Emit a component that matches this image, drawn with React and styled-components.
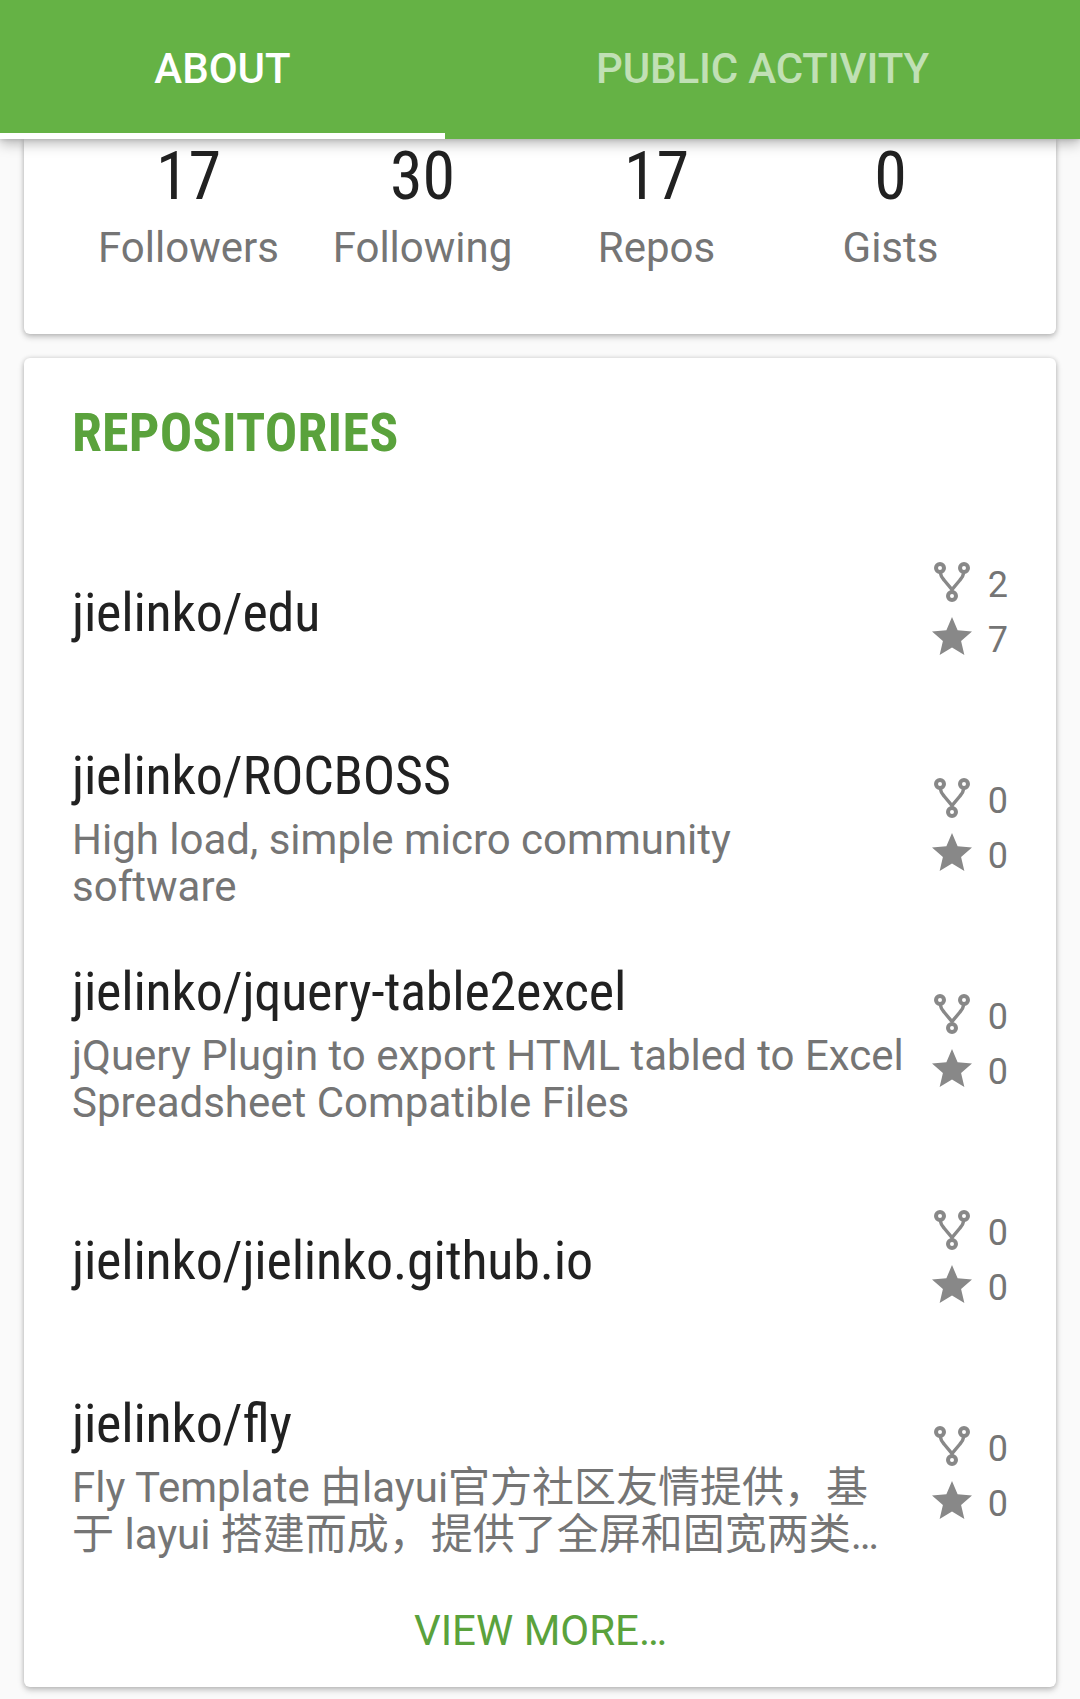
import React from "react";
import styled, { createGlobalStyle } from "styled-components";

const Global = createGlobalStyle`
  * { box-sizing: border-box; }
  body {
    margin: 0;
    background: #fafafa;
    font-family: Roboto, "Noto Sans CJK SC", sans-serif;
    color: #212121;
  }
`;

const Screen = styled.div`
  height: 1699px;
  overflow: hidden;
`;

const TabBar = styled.nav`
  position: relative;
  z-index: 1;
  display: flex;
  height: 139px;
  background: #65b245;
  box-shadow: 0 5px 12px rgba(0, 0, 0, 0.26), 0 1px 4px rgba(0, 0, 0, 0.12);
`;

const Tab = styled.div`
  flex: ${(p) => (p.$width ? `0 0 ${p.$width}px` : "1")};
  display: flex;
  justify-content: center;
  padding-top: 44px;
  line-height: 50px;
  font-size: 42px;
  font-weight: 500;
  letter-spacing: ${(p) => (p.$active ? "0" : "-0.15px")};
  white-space: nowrap;
  color: ${(p) => (p.$active ? "#fff" : "#c1e0b5")};
  border-bottom: 6px solid ${(p) => (p.$active ? "#fff" : "transparent")};
`;

const Card = styled.section`
  margin: 0 24px;
  background: #fff;
  border-radius: 6px;
  box-shadow: 0 3px 6px rgba(0, 0, 0, 0.22), 0 0 5px rgba(0, 0, 0, 0.14);
`;

const StatsCard = styled(Card)`
  display: grid;
  grid-template-columns: repeat(4, 1fr);
  height: 195px;
  padding: 0 48px;
  border-top-left-radius: 0;
  border-top-right-radius: 0;
  text-align: center;
`;

const Condensed = styled.span`
  display: block;
  font-family: "Roboto Condensed", Roboto, sans-serif;
  font-stretch: 75%;
  white-space: nowrap;
`;

const StatValue = styled(Condensed)`
  margin-right: 1px;
  font-size: 66px;
  line-height: 75px;
`;

const StatLabel = styled.div`
  margin: 9px 1px 0 0;
  font-size: 42px;
  line-height: 50px;
  color: #757575;
`;

const ReposCard = styled(Card)`
  margin-top: 24px;
  height: 1329px;
  padding: 43px 48px 0;
`;

const Heading = styled(Condensed)`
  font-size: 54px;
  line-height: 64px;
  font-weight: 700;
  letter-spacing: 0.22px;
  color: #5aa23c;
  margin-bottom: 37px;
`;

const Row = styled.article`
  display: flex;
  align-items: center;
  gap: 24px;
  height: 216px;
`;

const RowText = styled.div`
  flex: 1;
  min-width: 0;
  padding-top: 5px;
`;

const RepoName = styled(Condensed)`
  font-size: 54px;
  line-height: 64px;
  letter-spacing: -0.2px;
  font-feature-settings: "liga" 1;
`;

const Description = styled.p`
  margin: 8px 0 4px;
  font-size: 42px;
  line-height: 47px;
  color: #757575;
`;

const Counts = styled.div`
  display: grid;
  gap: 7px;
`;

const Count = styled.div`
  display: flex;
  gap: 12px;
  height: 48px;
  font-size: 36px;
  line-height: 52px;
  color: #757575;
`;

const Icon = styled.svg`
  width: 48px;
  height: 48px;
  flex: none;
  margin-top: -1px;
  color: #888;
`;

const ViewMore = styled.div`
  margin-top: 24px;
  padding-left: 1px;
  text-align: center;
  font-size: 42px;
  line-height: 50px;
  color: #5aa23c;
`;

const ForkIcon = () => (
  <Icon viewBox="0 0 24 24" fill="none" stroke="currentColor">
    <circle cx="6" cy="5" r="2" strokeWidth="2" />
    <circle cx="18" cy="5" r="2" strokeWidth="2" />
    <circle cx="12" cy="19" r="2" strokeWidth="2" />
    <path d="M6.1 7.2Q6.4 9.2 8 11L12 15.8L16 11Q17.6 9.2 17.9 7.2M12 15.6V17.2" strokeWidth="1.7" />
  </Icon>
);

const StarIcon = () => (
  <Icon viewBox="0 0 24 24" fill="currentColor">
    <path d="M12 17.27L18.18 21l-1.64-7.03L22 9.24l-7.19-.61L12 2 9.19 8.63 2 9.24l5.46 4.73L5.82 21z" />
  </Icon>
);

const stats = [
  ["17", "Followers"],
  ["30", "Following"],
  ["17", "Repos"],
  ["0", "Gists"],
];

const repos = [
  { name: "jielinko/edu", forks: 2, stars: 7 },
  { name: "jielinko/ROCBOSS", text: "High load, simple micro community software", forks: 0, stars: 0 },
  {
    name: "jielinko/jquery-table2excel",
    text: "jQuery Plugin to export HTML tabled to Excel Spreadsheet Compatible Files",
    forks: 0,
    stars: 0,
  },
  { name: "jielinko/jielinko.github.io", forks: 0, stars: 0 },
  {
    name: "jielinko/fly",
    text: "Fly Template 由layui官方社区友情提供，基于 layui 搭建而成，提供了全屏和固宽两类…",
    forks: 0,
    stars: 0,
  },
];

export default function App() {
  return (
    <Screen>
      <Global />
      <TabBar>
        <Tab $active $width={445}>ABOUT</Tab>
        <Tab>PUBLIC ACTIVITY</Tab>
      </TabBar>
      <StatsCard>
        {stats.map(([value, label]) => (
          <div key={label}>
            <StatValue>{value}</StatValue>
            <StatLabel>{label}</StatLabel>
          </div>
        ))}
      </StatsCard>
      <ReposCard>
        <Heading>REPOSITORIES</Heading>
        {repos.map((r) => (
          <Row key={r.name}>
            <RowText>
              <RepoName>{r.name}</RepoName>
              {r.text && <Description>{r.text}</Description>}
            </RowText>
            <Counts>
              <Count><ForkIcon />{r.forks}</Count>
              <Count><StarIcon />{r.stars}</Count>
            </Counts>
          </Row>
        ))}
        <ViewMore>VIEW MORE…</ViewMore>
      </ReposCard>
    </Screen>
  );
}
